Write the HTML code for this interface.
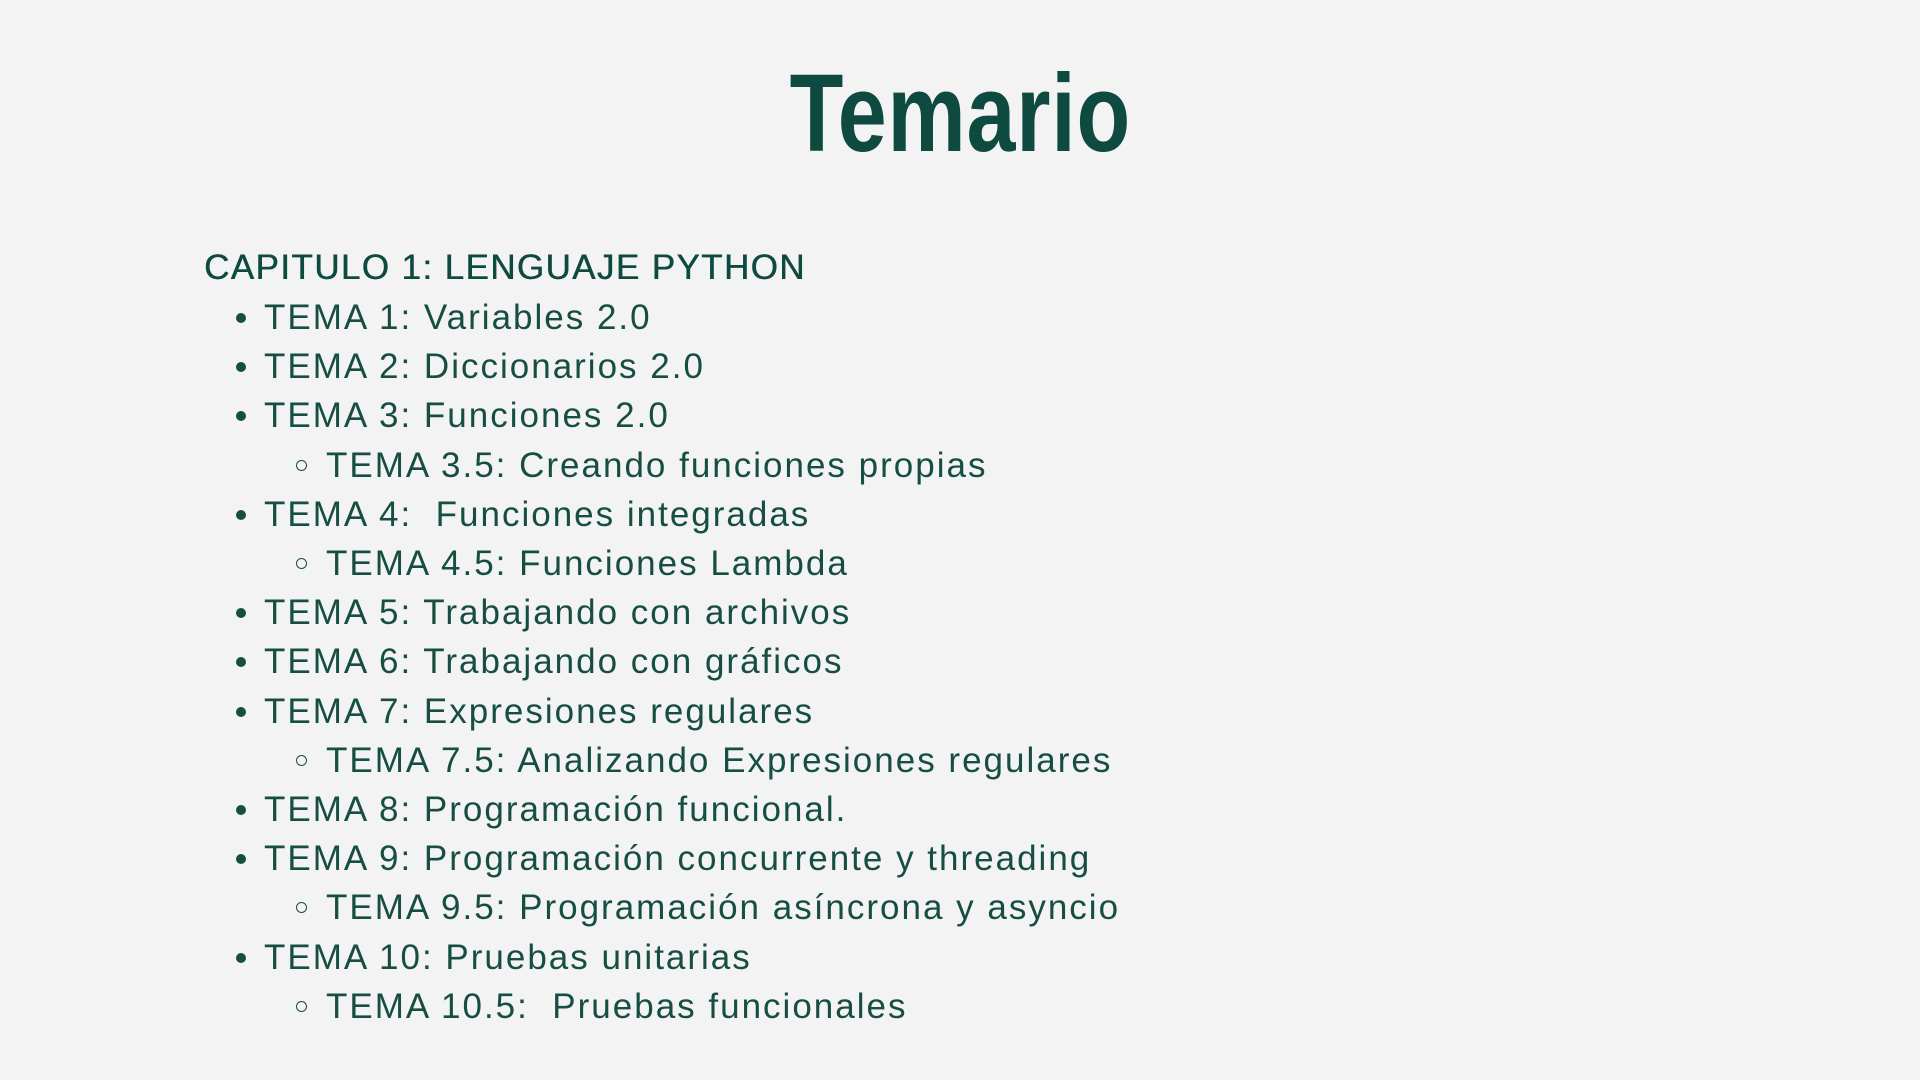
<!DOCTYPE html>
<html><head><meta charset="utf-8"><style>
html,body{margin:0;padding:0;background:#f3f3f3;width:1920px;height:1080px;overflow:hidden}
.t{position:absolute;left:0;width:1920px;top:54px;text-align:center;color:#0e4a40;font-family:"Liberation Sans Narrow","Liberation Sans",sans-serif;font-weight:bold;font-size:110px;line-height:120px;letter-spacing:1px}
.t span{display:inline-block;transform:scaleX(0.8)}
.l{position:absolute;font-family:"Liberation Sans",sans-serif;font-size:35px;color:#174e44;letter-spacing:2px;white-space:pre;line-height:40px}
.b{position:absolute;width:10px;height:10px;border-radius:50%;background:#174e44}
.c{position:absolute;width:9px;height:9px;border-radius:50%;border:1.5px solid #174e44}
</style></head><body>
<div class="t"><span>Temario</span></div>
<div class="l" style="left:204px;top:248px;color:#0e4a40;letter-spacing:1.4px;text-shadow:0.5px 0 0 #0e4a40">CAPITULO 1: LENGUAJE PYTHON</div>
<div id="x"></div>
<script>
var items=[[0,"TEMA 1: Variables 2.0"],[0,"TEMA 2: Diccionarios 2.0"],[0,"TEMA 3: Funciones 2.0"],[1,"TEMA 3.5: Creando funciones propias"],[0,"TEMA 4:  Funciones integradas"],[1,"TEMA 4.5: Funciones Lambda"],[0,"TEMA 5: Trabajando con archivos"],[0,"TEMA 6: Trabajando con gráficos"],[0,"TEMA 7: Expresiones regulares"],[1,"TEMA 7.5: Analizando Expresiones regulares"],[0,"TEMA 8: Programación funcional."],[0,"TEMA 9: Programación concurrente y threading"],[1,"TEMA 9.5: Programación asíncrona y asyncio"],[0,"TEMA 10: Pruebas unitarias"],[1,"TEMA 10.5:  Pruebas funcionales"]];
var h="";
items.forEach(function(it,i){var cy=318+i*49.2;
if(it[0]==0){h+='<div class="b" style="left:236px;top:'+(cy-5)+'px"></div><div class="l" style="left:264px;top:'+(cy-20)+'px">'+it[1]+'</div>';}
else{h+='<div class="c" style="left:296px;top:'+(cy-6)+'px"></div><div class="l" style="left:326px;top:'+(cy-20)+'px">'+it[1]+'</div>';}
});
document.getElementById("x").innerHTML=h;
</script>
</body></html>
